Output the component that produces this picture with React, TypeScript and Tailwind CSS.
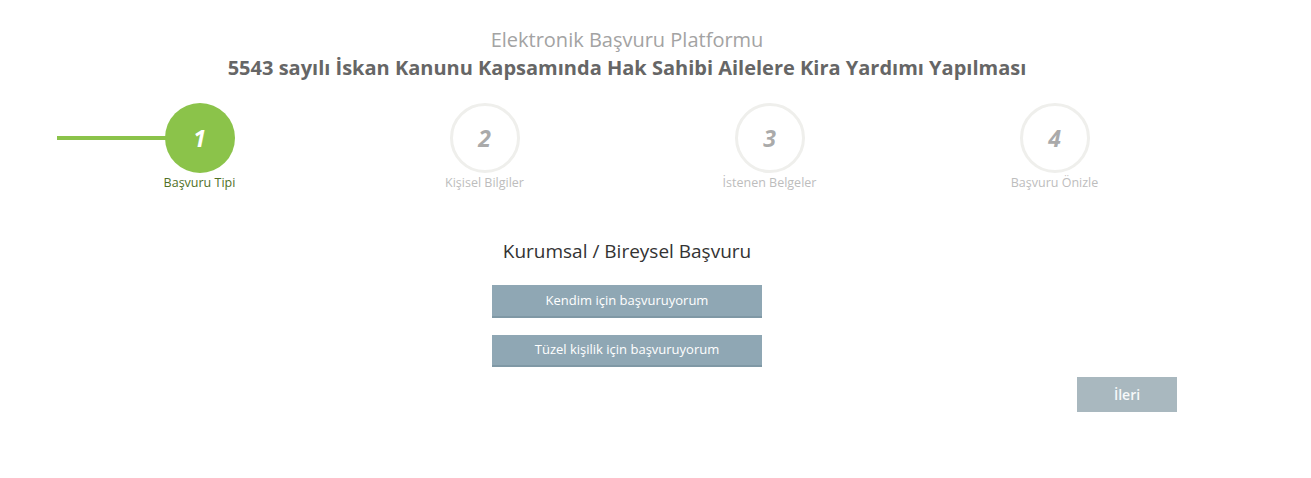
import React from "react";

const steps = [
  { n: "1", label: "Başvuru Tipi" },
  { n: "2", label: "Kişisel Bilgiler" },
  { n: "3", label: "İstenen Belgeler" },
  { n: "4", label: "Başvuru Önizle" },
];

export default function App() {
  return (
    <div className="w-[1254px] bg-white pb-[66px]" style={{ fontFamily: '"Open Sans", "Liberation Sans", sans-serif' }}>
      <div className="pt-[26px] text-center">
        <div className="text-[20px] leading-[28px] text-[#a3a3a3]">Elektronik Başvuru Platformu</div>
        <div className="text-[20px] leading-[28px] font-bold text-[#666666]">
          5543 sayılı İskan Kanunu Kapsamında Hak Sahibi Ailelere Kira Yardımı Yapılması
        </div>
      </div>

      <div className="mx-auto mt-[21px] grid w-[1140px] grid-cols-4">
        {steps.map((s, i) => (
          <div key={s.n} className="relative flex flex-col items-center">
            {i === 0 && (
              <div className="absolute left-0 top-[33px] h-[4px] w-[110px] bg-[#8bc34a]" />
            )}
            {i === 0 ? (
              <div className="relative flex h-[70px] w-[70px] items-center justify-center rounded-full bg-[#8bc34a] text-[23px] font-bold italic text-white">
                {s.n}
              </div>
            ) : (
              <div className="relative flex h-[70px] w-[70px] items-center justify-center rounded-full border-[3px] border-[#efefec] bg-white text-[23px] font-bold italic text-[#aaaaaa]">
                {s.n}
              </div>
            )}
            <div
              className={
                "mt-[1px] text-[12.5px] leading-[17px] " +
                (i === 0 ? "text-[#4f7026]" : "text-[#bdbdbd]")
              }
            >
              {s.label}
            </div>
          </div>
        ))}
      </div>

      <div className="mt-[48px] flex flex-col items-center">
        <div className="text-[19px] leading-[25px] text-[#333333]">Kurumsal / Bireysel Başvuru</div>
        <button className="mt-[21px] h-[33px] w-[270px] border-b-[2px] border-[#7f98a5] bg-[#8fa7b4] text-[13px] text-white">
          Kendim için başvuruyorum
        </button>
        <button className="mt-[17px] h-[32px] w-[270px] border-b-[2px] border-[#7f98a5] bg-[#8fa7b4] text-[13px] text-white">
          Tüzel kişilik için başvuruyorum
        </button>
      </div>

      <div className="mx-auto mt-[10px] flex w-[1140px] justify-end pr-[20px]">
        <button className="h-[35px] w-[100px] bg-[#a9b8bf] text-[14px] font-semibold text-[#f7f9fa]">İleri</button>
      </div>
    </div>
  );
}
